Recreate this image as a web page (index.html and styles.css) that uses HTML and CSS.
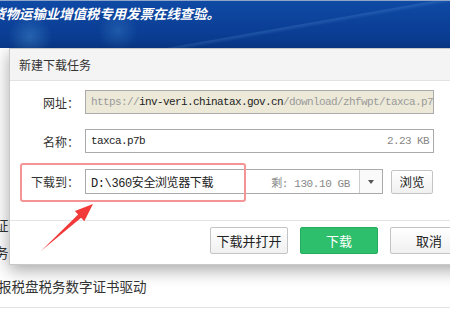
FILE: index.html
```html
<!DOCTYPE html>
<html lang="zh-CN">
<head>
    <meta charset="UTF-8">
    <title>新建下载任务</title>
    <link rel="stylesheet" href="styles.css">
</head>
<body>
    <!-- page behind the dialog -->
    <div class="banner">
        <p class="banner-text">货物运输业增值税专用发票在线查验。</p>
    </div>
    <ul class="page-list">
        <li class="item-cut">证·</li>
        <li class="item-cut">务·</li>
        <li class="item-main">报税盘税务数字证书驱动</li>
    </ul>

    <!-- download dialog -->
    <div class="dialog">
        <div class="dialog-title">新建下载任务</div>
        <div class="dialog-body">
            <div class="row row-url">
                <span class="label">网址：</span>
                <div class="field field-disabled">
                    <span class="dim">https://</span><span class="host">inv-veri.chinatax.gov.cn</span><span class="dim">/download/zhfwpt/taxca.p7</span>
                </div>
            </div>
            <div class="row row-name">
                <span class="label">名称：</span>
                <div class="field">
                    <span class="mono">taxca.p7b</span>
                    <span class="size">2.23 KB</span>
                </div>
            </div>
            <div class="row row-path">
                <span class="label">下载到：</span>
                <div class="select">
                    <div class="select-text">
                        <span class="mono">D:\360安全浏览器下载</span>
                        <span class="free">剩: 130.10 GB</span>
                    </div>
                    <div class="select-arrow"></div>
                </div>
                <button class="btn btn-browse">浏览</button>
            </div>
        </div>
        <div class="dialog-footer">
            <button class="btn btn-foot">下载并打开</button>
            <button class="btn btn-foot btn-green">下载</button>
            <button class="btn btn-foot">取消</button>
        </div>
        <div class="mark-box"></div>
    </div>

    <svg class="mark-arrow" width="450" height="311" viewBox="0 0 450 311">
        <polygon points="41,251 81.1,217.7 84.3,221.3 93,204 74.9,210.9 78.1,214.5" fill="#f23a3a"/>
    </svg>
</body>
</html>
```

FILE: styles.css
```css
body {
    margin: 0;
    width: 450px;
    height: 311px;
    overflow: hidden;
    position: relative;
    background: #fff;
    font-family: "Noto Sans CJK SC", "Noto Sans", sans-serif;
    color: #333;
}

/* banner */
.banner {
    height: 47px;
    border-top: 1px solid #8ea4c8;
    background:
        radial-gradient(circle at 30px 36px, rgba(90, 170, 230, 0.35), transparent 22px),
        radial-gradient(circle at 118px 30px, rgba(90, 170, 230, 0.25), transparent 20px),
        linear-gradient(170deg, transparent 60%, rgba(120, 180, 240, 0.18) 61%, transparent 64%),
        linear-gradient(180deg, #0f4aa5 0%, #0b3f96 60%, #0a3a8c 100%);
}
.banner-text {
    margin: 0;
    padding-top: 2px;
    margin-left: -8px;
    font-size: 13.5px;
    line-height: 20px;
    font-weight: bold;
    font-style: italic;
    color: #fff;
    letter-spacing: -0.1px;
}

/* list behind */
.page-list {
    list-style: none;
    margin: 0;
    padding: 164px 0 0;
}
.page-list li {
    font-size: 13.5px;
    line-height: 27px;
    color: #333;
}
.item-cut {
    margin-left: -5px;
}
.item-main {
    margin-top: 7px;
    margin-left: -2px;
    padding-bottom: 7px;
    border-bottom: 1px solid #e2e2e2;
}

/* dialog */
.dialog {
    position: absolute;
    left: 9px;
    top: 48px;
    width: 470px;
    background: #fff;
    border: 1px solid #c9c9c9;
    box-sizing: border-box;
    box-shadow: 0 5px 16px rgba(0, 0, 0, 0.35);
}
.dialog-title {
    height: 31px;
    line-height: 31px;
    padding-left: 9px;
    background: #f4f4f4;
    border-bottom: 1px solid #e2e2e2;
    font-size: 12px;
    color: #333;
}
.dialog-body {
    height: 139px;
    padding-top: 9px;
    box-sizing: border-box;
}
.row {
    display: flex;
    align-items: center;
}
.row-name {
    margin-top: 15px;
}
.row-path {
    margin-top: 16px;
}
.label {
    width: 69px;
    text-align: right;
    font-size: 12px;
    margin-right: 6px;
    color: #333;
}
.field {
    width: 349px;
    height: 24px;
    box-sizing: border-box;
    border: 1px solid #aaa;
    display: flex;
    align-items: center;
    justify-content: space-between;
    padding: 0 4px 0 5px;
    font-family: "Liberation Mono", "Noto Sans CJK SC", monospace;
    font-size: 11px;
    letter-spacing: -0.6px;
    white-space: nowrap;
    overflow: hidden;
}
.field-disabled {
    background: #ece9d8;
    justify-content: flex-start;
}
.dim {
    color: #9a9a9a;
}
.host {
    color: #222;
}
.mono {
    font-family: "Liberation Mono", "Noto Sans CJK SC", monospace;
    font-size: 11px;
    letter-spacing: -0.6px;
    color: #222;
}
.size {
    color: #888;
}
.select {
    width: 298px;
    height: 25px;
    box-sizing: border-box;
    border: 1px solid #aaa;
    display: flex;
}
.select-text {
    flex: 1;
    display: flex;
    align-items: center;
    justify-content: space-between;
    padding: 0 9px 0 5px;
    white-space: nowrap;
}
.select-text .mono {
    font-size: 12px;
    letter-spacing: -0.4px;
}
.free {
    font-family: "Liberation Mono", "Noto Sans CJK SC", monospace;
    font-size: 11px;
    letter-spacing: -0.4px;
    color: #888;
}
.select-arrow {
    width: 22px;
    border-left: 1px solid #ccc;
    background: #fafafa;
    position: relative;
}
.select-arrow::after {
    content: "";
    position: absolute;
    left: 8px;
    top: 10px;
    border-left: 3px solid transparent;
    border-right: 3px solid transparent;
    border-top: 4px solid #555;
}
.btn {
    font-family: "Noto Sans CJK SC", "Noto Sans", sans-serif;
    border: 1px solid #c4c4c4;
    border-radius: 2px;
    background: linear-gradient(#ffffff, #f0f0f0);
    color: #222;
    padding: 0;
    cursor: pointer;
}
.btn-browse {
    margin-left: 8px;
    width: 42px;
    height: 24px;
    font-size: 12.5px;
}
.dialog-footer {
    height: 44px;
    border-top: 1px solid #e4e4e4;
    display: flex;
    justify-content: flex-end;
    gap: 12px;
    padding: 6px 10px 0 0;
    box-sizing: border-box;
}
.btn-foot {
    width: 78px;
    height: 27px;
    font-size: 13px;
}
.btn-green {
    background: #2dbf6b;
    border-color: #25ad5e;
    color: #fff;
}

/* annotations */
.mark-box {
    position: absolute;
    left: 10px;
    top: 114px;
    width: 222px;
    height: 35px;
    border: 2px solid #f49494;
    border-radius: 3px;
}
.mark-arrow {
    position: absolute;
    left: 0;
    top: 0;
    pointer-events: none;
}
```
